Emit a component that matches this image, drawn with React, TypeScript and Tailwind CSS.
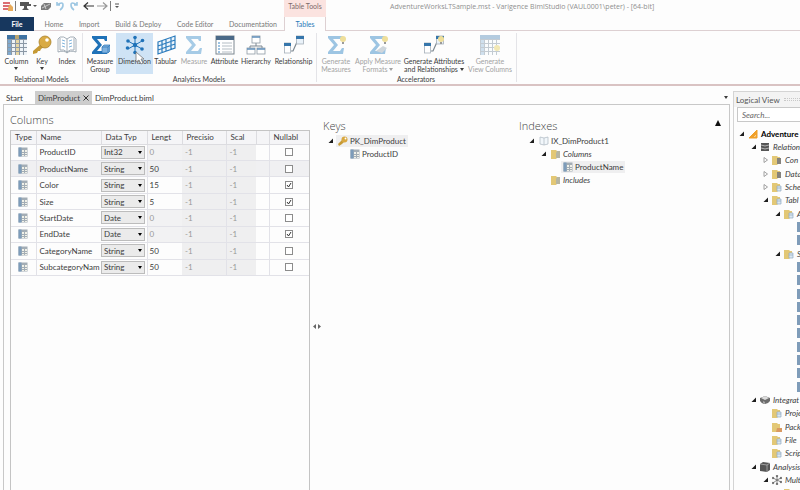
import React, { useState } from "react";

type IconName =
  | "column" | "key" | "index" | "measureGroup" | "dimension" | "tabular" | "measure"
  | "attribute" | "hierarchy" | "relationship" | "generate" | "apply" | "genAttr" | "viewColumns";

const SIGMA = "M2 1H17V6H15L14 4H7L12 10L7 16H14L16 13H18L17 19H2V17L8 10L2 3Z";

const Bulb = () => (
  <g>
    <circle cx="17" cy="4" r="3" fill="#efdf9a" />
    <rect x="16" y="7" width="2" height="2" fill="#9a9a9a" />
  </g>
);

const BigIcon: React.FC<{ name: IconName }> = ({ name }) => (
  <svg viewBox="0 0 20 20" className="h-5 w-5 shrink-0" aria-hidden="true">
    {name === "column" && (
      <>
        <rect x="0" y="0" width="20" height="20" fill="#8b98a5" />
        <rect x="0" y="0" width="20" height="4" fill="#3f73a3" />
        {[0, 1, 2, 3].map((r) =>
          [0, 1, 2, 3, 4].map((c) => (
            <rect
              key={`${r}-${c}`}
              x={1 + c * 4}
              y={5 + r * 4}
              width="3"
              height="3"
              fill={c === 2 ? "#e6d6a4" : c === 0 ? "#7fa9cf" : "#eef3f7"}
            />
          ))
        )}
        <rect x="8" y="0" width="4" height="4" fill="#b8a571" />
      </>
    )}
    {name === "key" && (
      <>
        <path d="M9 9L12 12L9 14L8 16L6 16L5 18L1 19L1 16Z" fill="#c69a35" />
        <circle cx="13" cy="7" r="6" fill="#d9ab45" stroke="#a9812b" strokeWidth="0.8" />
        <circle cx="15" cy="5" r="1.8" fill="#fff" />
      </>
    )}
    {name === "index" && (
      <g fill="#fff" stroke="#9aa5af" strokeWidth="0.9">
        <path d="M1 4L3 2Q7 1 10 4Q13 1 17 2L19 4V17Q13 15 10 18Q7 15 1 17Z" />
        <path d="M10 4V18M3 3V15Q7 14 10 17Q13 14 17 15V3" fill="none" />
        <path d="M5 5L8 6M5 8L8 9M5 11L8 12M12 6L15 5M12 9L15 8M12 12L15 11" stroke="#74add9" />
      </g>
    )}
    {name === "measureGroup" && (
      <>
        <path d={SIGMA} fill="#1f72b8" />
        <path d="M12 12L14 10H20V16L18 18H12Z" fill="#7db1df" stroke="#2a74b4" strokeWidth="0.7" />
        <path d="M12 12H18V18M18 12L20 10" fill="none" stroke="#2a74b4" strokeWidth="0.7" />
      </>
    )}
    {name === "dimension" && (
      <>
        <path d="M10 10L10 2M10 10L3 6M10 10L17 6M10 10L3 14M10 10L17 14M10 10V18" stroke="#1f72b8" strokeWidth="1" />
        <g fill="#1f72b8">
          <circle cx="10" cy="10" r="2.2" />
          <circle cx="10" cy="2.5" r="1.8" />
          <circle cx="3" cy="6" r="1.8" />
          <circle cx="17.5" cy="5.5" r="1.8" />
          <circle cx="2.5" cy="13" r="1.8" />
          <circle cx="17" cy="14" r="1.8" />
          <circle cx="10" cy="17.5" r="1.8" />
        </g>
      </>
    )}
    {name === "tabular" && (
      <path
        d="M2 7L19 1V13L2 19ZM2 11L19 5M2 15L19 9M6 6V17M10 4V16M15 3V14"
        fill="#eef5fb"
        stroke="#2c7cbd"
        strokeWidth="1.2"
      />
    )}
    {name === "measure" && <path d={SIGMA} fill="#a6cbe6" />}
    {name === "attribute" && (
      <>
        <rect x="1" y="1" width="18" height="18" fill="#fff" stroke="#7c8790" />
        <rect x="1" y="1" width="18" height="4" fill="#4b6a88" />
        <path d="M7 8H17M7 11H17M7 14H17M7 17H17" stroke="#b4bdc4" />
        <path d="M3 8H5M3 11H5M3 14H5M3 17H5" stroke="#3a86c4" />
      </>
    )}
    {name === "hierarchy" && (
      <>
        <path d="M10 8V11M4 14V11H16V14" fill="none" stroke="#7c8790" />
        <g fill="#fff" stroke="#8d99a4" strokeWidth="0.8">
          <rect x="6" y="1" width="8" height="7" />
          <rect x="1" y="13" width="8" height="6" />
          <rect x="11" y="13" width="8" height="6" />
        </g>
        <path d="M6 2H14M1 14H9M11 14H19" stroke="#5f8fba" strokeWidth="1.6" />
      </>
    )}
    {(name === "relationship" || name === "genAttr") && (
      <>
        <path d="M7 16H9L13 7" fill="none" stroke="#7c8790" strokeWidth="1.2" />
        <rect x="0.5" y="8" width="6" height="10" fill="#fff" stroke="#a5afb8" strokeWidth="0.8" />
        <rect x="0" y="8" width="7" height="3" fill="#3676ab" />
        <rect x="12.500" y="1" width="7" height="8" fill="#eaf2f9" stroke="#a5afb8" strokeWidth="0.8" />
        <rect x="12" y="1" width="8" height="3" fill="#3676ab" />
        {name === "genAttr" && <Bulb />}
      </>
    )}
    {name === "generate" && (
      <>
        <path d={SIGMA} fill="#9dc5e3" />
        <Bulb />
      </>
    )}
    {name === "apply" && (
      <>
        <path d={SIGMA} fill="#9dc5e3" />
        <path d="M8 16L15 11L19 13L14 18Z" fill="#cfd6dc" />
        <Bulb />
      </>
    )}
    {name === "viewColumns" && (
      <>
        <rect width="20" height="20" fill="#c3cbd2" />
        <rect width="20" height="4" fill="#b3cbdf" />
        {[0, 1, 2, 3].map((r) =>
          [0, 1, 2, 3, 4].map((c) => (
            <rect key={`${r}-${c}`} x={1 + c * 4} y={5 + r * 4} width="3" height="3" fill={c === 0 ? "#cfe0ee" : "#fafcfd"} />
          ))
        )}
        <circle cx="17" cy="13" r="3" fill="#f2e8b4" />
      </>
    )}
  </svg>
);

type SmallName =
  | "table" | "key" | "book" | "folder" | "folderGrey" | "folderBlue" | "folderRed"
  | "db" | "ruler" | "sphere" | "cube" | "star" | "tile";

const SmallIcon: React.FC<{ name: SmallName }> = ({ name }) => (
  <svg viewBox="0 0 10 10" className="h-[10px] w-[10px] shrink-0" aria-hidden="true">
    {name === "table" && (
      <>
        <rect x="0.500" y="0.500" width="9" height="9" fill="#a3adb5" />
        <rect x="0.500" y="0.500" width="3" height="9" fill="#7d9cba" />
        <path d="M4 3H6V5H4ZM7 3H9V5H7ZM4 6H6V7H4ZM7 6H9V7H7ZM4 8H6V9H4ZM7 8H9V9H7Z" fill="#f1f1e8" />
      </>
    )}
    {name === "tile" && (
      <>
        <rect width="10" height="10" fill="#7f9cb9" />
        <path d="M4 3H9V5H4ZM4 6H9V9H4Z" fill="#dfe5ea" />
      </>
    )}
    {name === "key" && (
      <>
        <path d="M4 4L6 6L4 8L1 10L0 8Z" fill="#c69a35" />
        <circle cx="6.500" cy="3.500" r="3" fill="#d9a840" />
        <circle cx="7.500" cy="2.500" r="0.9" fill="#fff" />
      </>
    )}
    {name === "book" && (
      <path d="M1 1L5 2L9 1V8L5 9L1 8ZM5 2V9" fill="#f2f7fb" stroke="#b4bec6" strokeWidth="0.8" />
    )}
    {name.startsWith("folder") && (
      <>
        <path d="M0 1H5L6 2H8V9H6L5 10H0Z" fill="#e3c876" />
        {name === "folder" && <path d="M6 2H9V9H5V4Z" fill="#b5b5a4" />}
        {name === "folderGrey" && <path d="M5 3H9V9H5Z" fill="#85837d" />}
        {name === "folderBlue" && <path d="M5 4H9V9H5ZM5 6H9" fill="#dbe8f2" stroke="#8fabc2" strokeWidth="0.7" />}
        {name === "folderRed" && <path d="M5 6H10V10H4Z" fill="#d99a62" />}
      </>
    )}
    {name === "db" && (
      <>
        <path d="M1 1H9V9H1Z" fill="#555" />
        <path d="M1 3Q5 5 9 3M1 6Q5 8 9 6" fill="none" stroke="#ccc" strokeWidth="0.8" />
      </>
    )}
    {name === "ruler" && <path d="M1 9L9 1V9ZM5 8H8V5Z" fill="#f0a029" fillRule="evenodd" stroke="#f0a029" />}
    {name === "sphere" && (
      <>
        <path d="M0 3L5 1L10 3V6Q8 9 5 9Q2 9 0 6Z" fill="#6c6c6c" />
        <path d="M1 3L5 1L9 3L5 5Z" fill="#dcdcdc" />
        <path d="M3 6L5 7V9L3 8Z" fill="#aaa" />
      </>
    )}
    {name === "cube" && (
      <>
        <path d="M0 2L3 0L10 1V8L7 10L0 9Z" fill="#555" />
        <path d="M0 2L7 3V10M7 3L10 1" fill="none" stroke="#bbb" strokeWidth="0.7" />
      </>
    )}
    {name === "star" && (
      <g stroke="#666" strokeWidth="0.8" fill="#555">
        <path d="M5 5L5 1M5 5L1 3M5 5L9 3M5 5L1 8M5 5L9 7M5 5L5 9" />
        <circle cx="5" cy="1" r="0.8" />
        <circle cx="1" cy="3" r="0.8" />
        <circle cx="9" cy="3" r="0.8" />
        <circle cx="1" cy="8" r="0.8" />
        <circle cx="9" cy="7" r="0.8" />
        <circle cx="5" cy="9" r="0.8" />
      </g>
    )}
  </svg>
);

const Twisty: React.FC<{ open?: boolean; hidden?: boolean }> = ({ open, hidden }) => (
  <svg viewBox="0 0 6 6" className={hidden ? "invisible h-[6px] w-[6px] shrink-0" : "h-[6px] w-[6px] shrink-0"} aria-hidden="true">
    {open ? <path d="M5 0.500V5H0.500Z" fill="#1e1e1e" /> : <path d="M1 0.500L4.500 3L1 5.500Z" fill="#fff" stroke="#8a8a8a" strokeWidth="0.8" />}
  </svg>
);

interface RibbonItem {
  icon: IconName;
  lines: string[];
  width: string;
  menu?: boolean;
  disabled?: boolean;
  active?: boolean;
}

const ribbonGroups: { label: string; pad: string; items: RibbonItem[] }[] = [
  {
    label: "Relational Models",
    pad: "pl-[3px] pr-[2px]",
    items: [
      { icon: "column", lines: ["Column"], width: "w-[27px]", menu: true },
      { icon: "key", lines: ["Key"], width: "w-[24px]", menu: true },
      { icon: "index", lines: ["Index"], width: "w-[26px]" },
    ],
  },
  {
    label: "Analytics Models",
    pad: "pl-[1px] pr-[2px]",
    items: [
      { icon: "measureGroup", lines: ["Measure", "Group"], width: "w-[32px]" },
      { icon: "dimension", lines: ["Dimension"], width: "w-[37px]", active: true },
      { icon: "tabular", lines: ["Tabular"], width: "w-[25px]" },
      { icon: "measure", lines: ["Measure"], width: "w-[32px]", disabled: true },
      { icon: "attribute", lines: ["Attribute"], width: "w-[29px]" },
      { icon: "hierarchy", lines: ["Hierarchy"], width: "w-[34px]" },
      { icon: "relationship", lines: ["Relationship"], width: "w-[41px]" },
    ],
  },
  {
    label: "Accelerators",
    pad: "pl-[1px] pr-[2px]",
    items: [
      { icon: "generate", lines: ["Generate", "Measures"], width: "w-[36px]", disabled: true },
      { icon: "apply", lines: ["Apply Measure", "Formats"], width: "w-[48px]", menu: true, disabled: true },
      { icon: "genAttr", lines: ["Generate Attributes", "and Relationships"], width: "w-[64px]", menu: true },
      { icon: "viewColumns", lines: ["Generate", "View Columns"], width: "w-[48px]", disabled: true },
    ],
  },
];

const menuTabs = ["Home", "Import", "Build & Deploy", "Code Editor", "Documentation"];

interface Column {
  name: string;
  type: string;
  length: string;
  fixed?: boolean;
  nullable: boolean;
}

const initialColumns: Column[] = [
  { name: "ProductID", type: "Int32", length: "0", fixed: true, nullable: false },
  { name: "ProductName", type: "String", length: "50", nullable: false },
  { name: "Color", type: "String", length: "15", nullable: true },
  { name: "Size", type: "String", length: "5", nullable: true },
  { name: "StartDate", type: "Date", length: "0", fixed: true, nullable: false },
  { name: "EndDate", type: "Date", length: "0", fixed: true, nullable: true },
  { name: "CategoryName", type: "String", length: "50", nullable: false },
  { name: "SubcategoryNam", type: "String", length: "50", nullable: false },
];

interface TreeRow {
  indent: string;
  icon?: SmallName;
  label?: string;
  open?: boolean;
  leaf?: boolean;
  bold?: boolean;
}

const tile: TreeRow = { indent: "pl-[54px]", icon: "tile", leaf: true };

const logicalTree: TreeRow[] = [
  { indent: "pl-[5px]", icon: "ruler", label: "Adventure", open: true, bold: true },
  { indent: "pl-[17px]", icon: "db", label: "Relation", open: true },
  { indent: "pl-[29px]", icon: "folderGrey", label: "Con" },
  { indent: "pl-[29px]", icon: "folderGrey", label: "Data" },
  { indent: "pl-[29px]", icon: "folderBlue", label: "Sche" },
  { indent: "pl-[29px]", icon: "folderBlue", label: "Tabl", open: true },
  { indent: "pl-[41px]", icon: "folderBlue", label: "A", open: true },
  tile,
  tile,
  { indent: "pl-[41px]", icon: "folderBlue", label: "S", open: true },
  ...Array(10).fill(tile),
  { indent: "pl-[17px]", icon: "sphere", label: "Integrat", open: true },
  { indent: "pl-[29px]", icon: "folderBlue", label: "Proje", leaf: true },
  { indent: "pl-[29px]", icon: "folderRed", label: "Pack", leaf: true },
  { indent: "pl-[29px]", icon: "folderBlue", label: "File", leaf: true },
  { indent: "pl-[29px]", icon: "folderBlue", label: "Scrip", leaf: true },
  { indent: "pl-[17px]", icon: "cube", label: "Analysis", open: true },
  { indent: "pl-[29px]", icon: "star", label: "Mult", open: true },
  { indent: "pl-[41px]", icon: "folder", leaf: true },
];

const RibbonButton: React.FC<{ item: RibbonItem }> = ({ item }) => (
  <button
    type="button"
    disabled={item.disabled}
    className={`flex h-[41px] shrink-0 flex-col items-center pt-[2px] ${item.width} ${item.active ? "bg-[#cfe3f5]" : ""} ${
      item.disabled ? "text-[#a3a3a3]" : "text-[#3c3c3c]"
    }`}
  >
    <BigIcon name={item.icon} />
    <span className="mt-[2px] flex flex-col items-center whitespace-nowrap text-[7px] leading-[8px]">
      {item.lines.map((line, i) => (
        <span key={line} className="flex items-center gap-[2px]">
          {line}
          {item.menu && i === 1 && <Caret />}
        </span>
      ))}
      {item.menu && item.lines.length === 1 && (
        <span className="flex h-[7px] items-center">
          <Caret />
        </span>
      )}
    </span>
  </button>
);

const Caret = () => (
  <svg viewBox="0 0 4 3" className="h-[3px] w-[4px] shrink-0" aria-hidden="true">
    <path d="M0 0H4L2 3Z" fill="currentColor" />
  </svg>
);

const QuickAccess = () => (
  <svg viewBox="0 0 122 14" className="h-[14px] w-[122px]" aria-hidden="true">
    <path d="M3 3H10M3 6H11M3 9H11" stroke="#cf3f45" strokeWidth="1.6" />
    <path d="M10 4L13 7V11H8V8Z" fill="#e8ab5a" />
    <path d="M15.500 1V11M110.500 1V11" stroke="#7e7e7e" />
    <path d="M20 2H29V4H31V6H27V8L29 10H22L24 8V6H20Z" fill="#565656" />
    <path d="M33 5H37L35 7Z" fill="#555" />
    <path d="M41 6L44 3H51V7L48 10H41Z" fill="#7d7d7d" />
    <path d="M42 8L50 4M44 4L46 9" stroke="#dcdcdc" strokeWidth="0.8" />
    <path d="M57 2V5H60M57 5Q63 1 63 5Q63 8 60 10" fill="none" stroke="#9cc6e2" strokeWidth="1.6" />
    <path d="M77 2V5H74M77 5Q71 1 71 5Q71 8 74 10" fill="none" stroke="#9cc6e2" strokeWidth="1.6" />
    <path d="M94 6H84M88 2.500L84 6L88 9.500" fill="none" stroke="#333" strokeWidth="1.2" />
    <path d="M97 6H107M103 2.500L107 6L103 9.500" fill="none" stroke="#999" strokeWidth="1.2" />
    <path d="M115 4H119" stroke="#555" />
    <path d="M115 6H119L117 8Z" fill="#555" />
  </svg>
);

const ColumnsGrid = () => {
  const [columns, setColumns] = useState(initialColumns);

  const update = (index: number, patch: Partial<Column>) => {
    setColumns(columns.map((c, i) => (i === index ? { ...c, ...patch } : c)));
  };

  return (
    <table className="h-[145px] w-full table-fixed border-collapse text-[8px] leading-[10px] text-[#3c3c3c]">
      <colgroup>
        <col className="w-[25px]" />
        <col className="w-[65px]" />
        <col className="w-[46px]" />
        <col className="w-[35px]" />
        <col className="w-[44px]" />
        <col className="w-[30px]" />
        <col className="w-[13px]" />
        <col />
      </colgroup>
      <thead>
        <tr className="h-[13px] bg-[#f5f5f7] text-left">
          {["Type", "Name", "Data Typ", "Lengt", "Precisio", "Scal", "", "Nullabl"].map((h) => (
            <th key={h} scope="col" className="overflow-hidden border-r border-b border-[#dcdce0] px-[4px] py-0 font-normal whitespace-nowrap last:border-r-0">
              {h}
            </th>
          ))}
        </tr>
      </thead>
      <tbody>
        {columns.map((col, i) => (
          <tr key={col.name} className={i === 1 ? "bg-[#f0f0f2]" : ""}>
            <td className="border-r border-b border-[#e2e2e8] p-0">
              <div className="flex justify-center"><SmallIcon name="table" /></div>
            </td>
            <td className="overflow-hidden border-b border-[#e2e2e8] py-0 pl-[3px] whitespace-nowrap">{col.name}</td>
            <td className="border-r border-b border-[#e2e2e8] p-0">
              <div className="relative w-[44px]">
                <select
                  aria-label={`${col.name} data type`}
                  value={col.type}
                  onChange={(e) => update(i, { type: e.target.value })}
                  className="block h-[13px] w-full appearance-none border border-[#bcbcbc] bg-[#ebebeb] pl-[2px] text-[8px] leading-[10px]"
                >
                  <option>Int32</option>
                  <option>String</option>
                  <option>Date</option>
                </select>
                <span className="pointer-events-none absolute top-[5px] right-[3px] text-black"><Caret /></span>
              </div>
            </td>
            <td className={`border-b border-[#e2e2e8] py-0 pl-[2px] ${col.fixed ? "bg-[#f2f2f3] text-[#999]" : ""}`}>{col.length}</td>
            <td className="border-r border-b border-[#e2e2e8] bg-[#efeff0] py-0 pl-[3px] text-[#999]">-1</td>
            <td className="border-b border-[#e2e2e8] bg-[#efeff0] py-0 pl-[3px] text-[#999]">-1</td>
            <td className="border-r border-b border-[#e2e2e8] p-0" />
            <td className="border-b border-[#e2e2e8] p-0">
              <label className="relative mx-auto block h-[8px] w-[8px]">
                <input
                  type="checkbox"
                  aria-label={`${col.name} nullable`}
                  checked={col.nullable}
                  onChange={(e) => update(i, { nullable: e.target.checked })}
                  className="peer block h-[8px] w-[8px] appearance-none border border-[#8c8c8c] bg-white"
                />
                <svg viewBox="0 0 8 8" className="pointer-events-none invisible absolute inset-0 peer-checked:visible" aria-hidden="true">
                  <path d="M2 4L3.500 6L6 2" fill="none" stroke="#333" />
                </svg>
              </label>
            </td>
          </tr>
        ))}
      </tbody>
    </table>
  );
};

const TreeItem: React.FC<{
  indent: string;
  icon: SmallName;
  label: string;
  open?: boolean;
  selected?: boolean;
  italic?: boolean;
}> = ({ indent, icon, label, open, selected, italic }) => (
  <div className={`flex h-[13px] items-center gap-[2px] ${indent}`}>
    <Twisty open hidden={!open} />
    <span className={`flex h-[12px] items-center gap-[2px] px-[2px] ${selected ? "bg-[#efeff0]" : ""} ${italic ? "italic" : ""}`}>
      <SmallIcon name={icon} />
      {label}
    </span>
  </div>
);

const App = () => (
  <div className="flex h-screen flex-col overflow-hidden bg-[#fdfdfd] font-['Lato','Open_Sans',sans-serif] text-[8px] leading-[10px] text-[#3c3c3c]">
    <header className="shrink-0">
      <div className="flex h-[17px] items-start">
        <div className="w-[284px] shrink-0"><QuickAccess /></div>
        <div className="flex h-full w-[42px] shrink-0 justify-center bg-[#fbe3e0] pt-[1px] text-[7px] whitespace-nowrap text-[#7d6a6a]">Table Tools</div>
        <div className="pt-[2px] pl-[64px] font-['Open_Sans',sans-serif] text-[7px] whitespace-nowrap text-[#8f8f8f]">
          AdventureWorksLTSample.mst - Varigence BimlStudio (VAUL0001\peter) - [64-bit]
        </div>
      </div>
      <nav className="flex h-[14px] border-b border-[#ddd0d2] text-[7px] whitespace-nowrap text-[#777]">
        <div className="flex w-[284px] shrink-0 justify-between">
          <button type="button" className="mr-[2px] h-[14px] w-[34px] bg-[#17375e] font-bold text-white">File</button>
          {menuTabs.map((tab) => (
            <button type="button" key={tab} className="px-[7px]">{tab}</button>
          ))}
        </div>
        <button type="button" className="h-[14px] w-[42px] border-x border-[#ddd0d2] bg-[#fdfdfd] text-[#2a7ab8]">Tables</button>
      </nav>
      <div className="flex h-[55px] border-b-2 border-[#d9c3c3] py-[2px]">
        {ribbonGroups.map((group) => (
          <section key={group.label} className={`flex flex-col items-center border-r border-[#e4e4e8] ${group.pad}`}>
            <div className="flex">
              {group.items.map((item) => <RibbonButton key={item.icon} item={item} />)}
            </div>
            <span className="text-[7px]">{group.label}</span>
          </section>
        ))}
      </div>
    </header>

    {/* mouse pointer over the Dimension button */}
    <svg viewBox="0 0 10 14" className="absolute top-[51px] left-[135px] h-[14px] w-[10px]" aria-hidden="true">
      <path d="M1 1V11L4 9L6 13L8 12L6 8H9Z" fill="#fff" stroke="#777" strokeWidth="0.8" />
    </svg>

    <div className="flex min-h-0 flex-1 gap-[3px] pt-[5px] pl-[3px]">
      <main className="flex min-w-0 flex-1 flex-col">
        <div className="flex h-[13px] shrink-0 items-center whitespace-nowrap">
          <button type="button" className="w-[32px] pl-[3px] text-left">Start</button>
          <div className="flex h-full w-[57px] items-center justify-between bg-[#cdcdcd] px-[3px]">
            <button type="button">DimProduct</button>
            <button type="button" aria-label="Close DimProduct">
              <svg viewBox="0 0 6 6" className="h-[6px] w-[6px]"><path d="M0.500 0.500L5.500 5.500M5.500 0.500L0.500 5.500" stroke="#333" /></svg>
            </button>
          </div>
          <button type="button" className="pl-[3px]">DimProduct.biml</button>
          <span className="ml-auto pr-[2px]"><Caret /></span>
        </div>

        <div className="flex min-h-0 flex-1 border border-b-0 border-[#c8c8c8] pl-[6px]">
          <section className="flex w-[300px] shrink-0 flex-col pt-[7px]">
            <h2 className="h-[18px] font-['Open_Sans',sans-serif] text-[11px] leading-[16px] font-light text-[#444]">Columns</h2>
            <div className="min-h-0 flex-1 border border-b-0 border-[#c4c4c4]">
              <ColumnsGrid />
            </div>
          </section>
          <div className="flex w-[13px] shrink-0 justify-center pt-[219px]">
            <svg viewBox="0 0 8 5" className="h-[5px] w-[8px]" aria-hidden="true">
              <path d="M3 0V5L0 2.500ZM5 0V5L8 2.500Z" fill="#666" />
            </svg>
          </div>
          <section className="w-[196px] shrink-0 pt-[13px]">
            <h2 className="font-['Open_Sans',sans-serif] text-[11px] leading-[16px] font-light text-[#444]">Keys</h2>
            <TreeItem indent="pl-[5px]" icon="key" label="PK_DimProduct" open selected />
            <TreeItem indent="pl-[17px]" icon="table" label="ProductID" />
          </section>
          <section className="min-w-0 flex-1 pt-[13px]">
            <div className="flex justify-between pr-[8px]">
              <h2 className="font-['Open_Sans',sans-serif] text-[11px] leading-[16px] font-light text-[#444]">Indexes</h2>
              <svg viewBox="0 0 6 6" className="mt-[2px] h-[6px] w-[6px]" aria-hidden="true"><path d="M3 0L6 6H0Z" fill="#111" /></svg>
            </div>
            <TreeItem indent="pl-[10px]" icon="book" label="IX_DimProduct1" open />
            <TreeItem indent="pl-[22px]" icon="folder" label="Columns" open italic />
            <TreeItem indent="pl-[34px]" icon="table" label="ProductName" selected />
            <TreeItem indent="pl-[22px]" icon="folder" label="Includes" italic />
          </section>
        </div>
      </main>

      <aside className="flex w-[67px] shrink-0 flex-col overflow-hidden border-t border-l border-[#d4d4d4]">
        <div className="flex h-[15px] shrink-0 items-center gap-[4px] bg-[#f3f3f3] pl-[2px] whitespace-nowrap text-[#555]">
          Logical View
          <span className="h-[3px] flex-1 border-y border-dotted border-[#c8c8c8]" />
        </div>
        <input
          aria-label="Search"
          placeholder="Search..."
          className="ml-[3px] h-[15px] w-full shrink-0 border border-[#c8c8c8] bg-white pl-[4px] placeholder:text-[#666] placeholder:italic"
        />
        <div className="mt-[5px] grid h-[373px] shrink-0 auto-rows-fr whitespace-nowrap">
          {logicalTree.map((row, i) => (
            <div key={i} className={`flex items-center gap-[3px] ${row.indent} ${row.bold ? "font-bold text-black" : "italic"}`}>
              <Twisty open={row.open} hidden={row.leaf} />
              {row.icon && <SmallIcon name={row.icon} />}
              {row.label}
            </div>
          ))}
        </div>
      </aside>
    </div>
  </div>
);

export default App;
